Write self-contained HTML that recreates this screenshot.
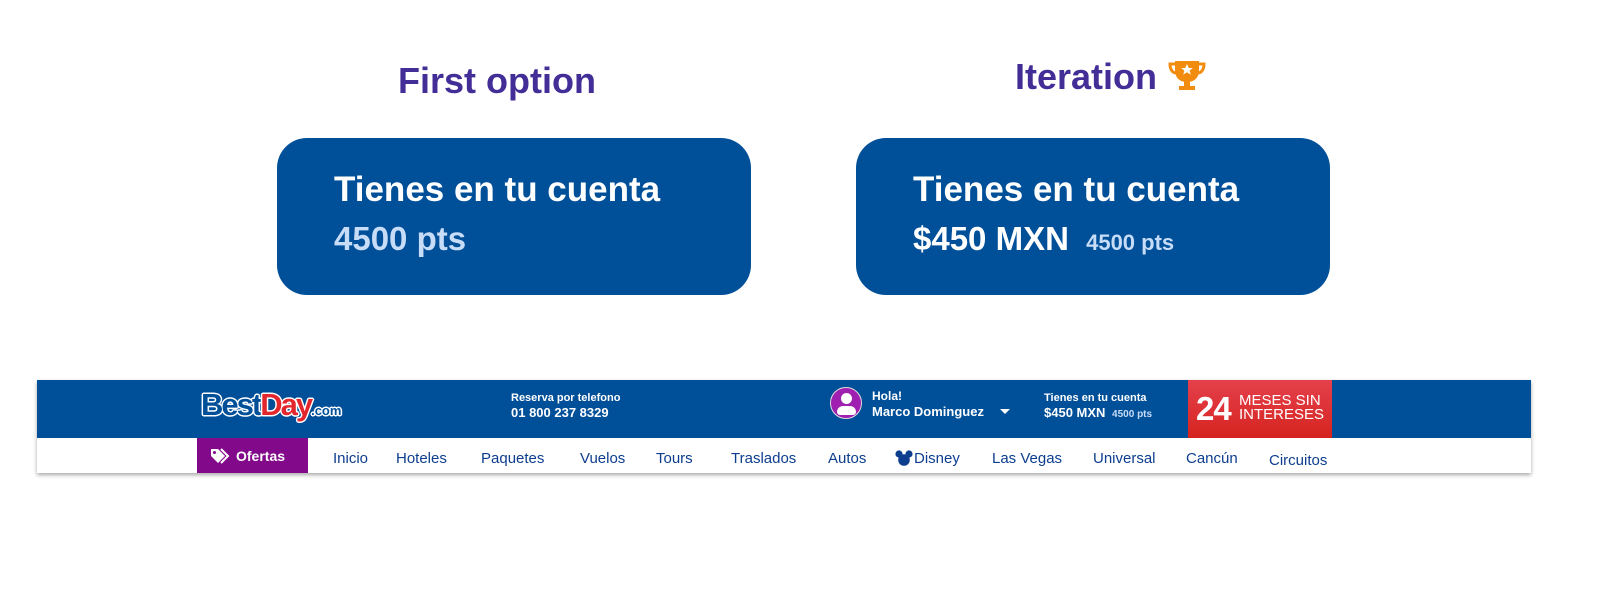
<!DOCTYPE html><html><head><style>
body{margin:0;width:1600px;height:603px;background:#fff;font-family:"Liberation Sans",sans-serif;position:relative;overflow:hidden}
.a{position:absolute;white-space:nowrap}
h2{position:absolute;margin:0;font-size:36px;color:#432d96;font-weight:bold}
.card{position:absolute;top:138px;width:474px;height:157px;background:#004f99;border-radius:30px}
.card .t{position:absolute;left:57px;top:32px;color:#fff;font-size:35px;font-weight:bold}
.nav a{position:absolute;top:450px;color:#0d3d8f;font-size:15px}
.logo span{font-weight:bold;text-shadow:1.5px 0 #fff,-1.5px 0 #fff,0 1.5px #fff,0 -1.5px #fff,1px 1px #fff,-1px -1px #fff,1px -1px #fff,-1px 1px #fff}
</style></head><body>
<h2 style="left:398px;top:60px">First option</h2>
<h2 style="left:1015px;top:56px">Iteration</h2>
<svg class="a" style="left:1168px;top:58px" width="38" height="34" viewBox="0 0 38 34"><path d="M7 3h24v9c0 8-5 12-12 12S7 20 7 12z" fill="#f28c0f"/><path d="M7 6H2c0 6 3 9 6 9M31 6h5c0 6-3 9-6 9" stroke="#f28c0f" stroke-width="3" fill="none"/><rect x="16" y="22" width="6" height="6" fill="#f28c0f"/><rect x="11" y="28" width="16" height="4" fill="#f28c0f"/><path d="M19 6l1.8 4h4l-3.2 2.6 1.2 4-3.8-2.4-3.8 2.4 1.2-4L13.2 10h4z" fill="#fff"/></svg>
<div class="card" style="left:277px"><div class="t a">Tienes en tu cuenta</div><div class="a" style="left:57px;top:82px;color:#c7dcf7;font-size:33px;font-weight:bold">4500 pts</div></div>
<div class="card" style="left:856px"><div class="t a">Tienes en tu cuenta</div><div class="a" style="left:57px;top:82px;color:#fff;font-size:33px;font-weight:bold">$450 MXN <span style="font-size:22px;color:#c7dcf7;margin-left:8px">4500 pts</span></div></div>
<div class="a" style="left:37px;top:380px;width:1494px;height:93px;box-shadow:0 2px 4px rgba(0,0,0,.35);background:#fff"></div>
<div class="a" style="left:37px;top:380px;width:1494px;height:58px;background:#004f99"></div>
<div class="a logo" style="left:201px;top:388px;font-size:31px;letter-spacing:-2px;line-height:34px"><span style="color:#004f99">Best</span><span style="color:#e3262d">Day</span><span style="color:#004f99;font-size:13px;letter-spacing:0">.com</span></div>
<div class="a" style="left:511px;top:392px;color:#fff;font-weight:bold;font-size:11px">Reserva por telefono</div>
<div class="a" style="left:511px;top:405px;color:#fff;font-weight:bold;font-size:13px">01 800 237 8329</div>
<div class="a" style="left:830px;top:387px;width:32px;height:32px;border-radius:50%;background:#9f1fb0;border:1px solid #ddd;box-sizing:border-box;overflow:hidden"><div class="a" style="left:10px;top:5px;width:11px;height:11px;border-radius:50%;background:#fff"></div><div class="a" style="left:6px;top:18px;width:19px;height:9px;border-radius:8px 8px 4px 4px;background:#fff"></div></div>
<div class="a" style="left:872px;top:389px;color:#fff;font-weight:bold;font-size:12px">Hola!</div>
<div class="a" style="left:872px;top:404px;color:#fff;font-weight:bold;font-size:13px">Marco Dominguez</div>
<div class="a" style="left:1000px;top:409px;border:5px solid transparent;border-top:5px solid #fff"></div>
<div class="a" style="left:1044px;top:392px;color:#fff;font-weight:bold;font-size:11px">Tienes en tu cuenta</div>
<div class="a" style="left:1044px;top:405px;color:#fff;font-weight:bold;font-size:13px">$450 MXN <span style="font-size:10px;color:#c7dcf7;margin-left:3px">4500 pts</span></div>
<div class="a" style="left:1188px;top:380px;width:144px;height:58px;background:linear-gradient(#e5404c,#d5241f)"></div>
<div class="a" style="left:1196px;top:390px;color:#fff;font-weight:bold;font-size:33px;letter-spacing:-1px">24</div>
<div class="a" style="left:1239px;top:394px;color:#fff;font-size:15px;line-height:14px">MESES SIN<br>INTERESES</div>
<div class="a" style="left:197px;top:438px;width:111px;height:35px;background:#820a8a"></div>
<svg class="a" style="left:210px;top:448px" width="22" height="16" viewBox="0 0 22 16"><path d="M1 1h7l7 7-7 7-7-7z" fill="#fff"/><circle cx="4.5" cy="4.5" r="1.5" fill="#820a8a"/><path d="M11 1l7 7-7 7" stroke="#fff" stroke-width="2" fill="none"/></svg>
<div class="a" style="left:236px;top:448px;color:#fff;font-weight:bold;font-size:14px">Ofertas</div>
<div class="nav"><a style="left:333px">Inicio</a><a style="left:396px">Hoteles</a><a style="left:481px">Paquetes</a><a style="left:580px">Vuelos</a><a style="left:656px">Tours</a><a style="left:731px">Traslados</a><a style="left:828px">Autos</a><a style="left:914px">Disney</a><a style="left:992px">Las Vegas</a><a style="left:1093px">Universal</a><a style="left:1186px">Cancún</a><a style="left:1269px;top:452px">Circuitos</a></div>
<svg class="a" style="left:895px;top:450px" width="18" height="16" viewBox="0 0 18 16"><circle cx="4" cy="4" r="3.6" fill="#0d3d8f"/><circle cx="14" cy="4" r="3.6" fill="#0d3d8f"/><circle cx="9" cy="10" r="5.8" fill="#0d3d8f"/></svg>
</body></html>
